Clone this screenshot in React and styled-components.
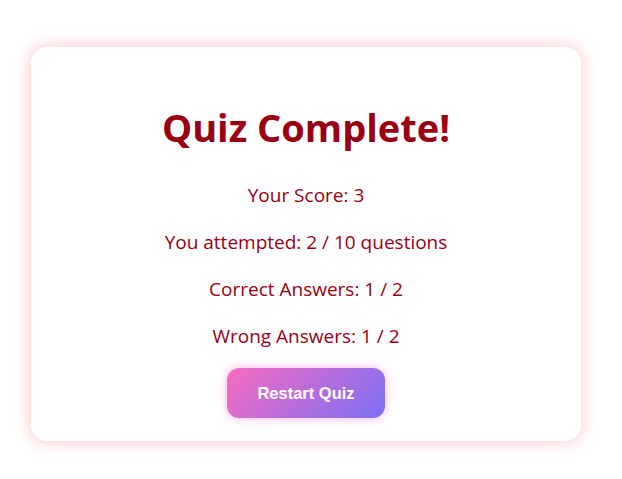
import React from "react";
import styled, { createGlobalStyle } from "styled-components";

const GlobalStyle = createGlobalStyle`
  body {
    margin: 0;
    background: #ffffff;
    font-family: "Open Sans", "Noto Sans", sans-serif;
  }
`;

const Page = styled.div`
  display: flex;
  padding: 47px 41px 38px 31px;
`;

const Card = styled.div`
  width: 550px;
  height: 394px;
  box-sizing: border-box;
  background: #ffffff;
  border-radius: 16px;
  box-shadow: 0 0 14px 4px rgba(255, 170, 170, 0.45);
  display: flex;
  flex-direction: column;
  align-items: center;
  padding-top: 54px;
`;

const Title = styled.h1`
  margin: 0 0 29px;
  font-size: 38px;
  line-height: 52px;
  font-weight: 700;
  color: #990012;
`;

const Stat = styled.p`
  margin: 0 0 20px;
  font-size: 19px;
  line-height: 27px;
  color: #990012;
`;

const RestartButton = styled.button`
  margin-top: -2px;
  width: 158px;
  height: 50px;
  border: none;
  border-radius: 12px;
  background: linear-gradient(135deg, #f86bc0 0%, #7a6ff5 100%);
  box-shadow: 0 0 10px rgba(255, 110, 200, 0.55);
  color: #ffffff;
  font-family: "Liberation Sans", Arial, sans-serif;
  font-size: 16.5px;
  font-weight: 700;
  cursor: pointer;
`;

const stats = [
  "Your Score: 3",
  "You attempted: 2 / 10 questions",
  "Correct Answers: 1 / 2",
  "Wrong Answers: 1 / 2",
];

const App = () => {
  return (
    <>
      <GlobalStyle />
      <Page>
        <Card>
          <Title>Quiz Complete!</Title>
          {stats.map((s) => (
            <Stat key={s}>{s}</Stat>
          ))}
          <RestartButton>Restart Quiz</RestartButton>
        </Card>
      </Page>
    </>
  );
};

export default App;
